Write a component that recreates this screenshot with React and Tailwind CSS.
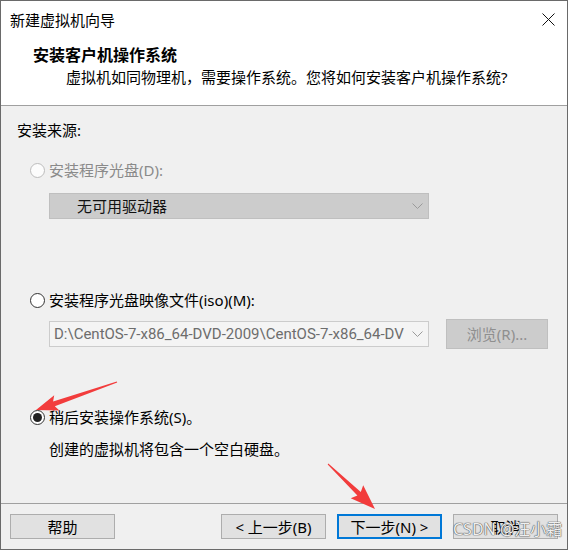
import React from "react";

function arrowPoints(tx, ty, hx, hy, headLen, headHalf, tailW, neckW) {
  const dx = hx - tx, dy = hy - ty;
  const L = Math.hypot(dx, dy);
  const ux = dx / L, uy = dy / L;
  const px = -uy, py = ux;
  const bx = hx - ux * headLen, by = hy - uy * headLen;
  const pts = [
    [tx + px * tailW / 2, ty + py * tailW / 2],
    [bx + px * neckW / 2, by + py * neckW / 2],
    [bx + px * headHalf - ux * 3, by + py * headHalf - uy * 3],
    [hx, hy],
    [bx - px * headHalf - ux * 3, by - py * headHalf - uy * 3],
    [bx - px * neckW / 2, by - py * neckW / 2],
    [tx - px * tailW / 2, ty - py * tailW / 2],
  ];
  return pts.map((p) => p.map((v) => v.toFixed(1)).join(",")).join(" ");
}

function Chevron() {
  return (
    <svg width="11" height="7" viewBox="0 0 11 7" className="shrink-0">
      <polyline points="0.5,0.5 5.5,5.5 10.5,0.5" fill="none" stroke="#9a9a9a" strokeWidth="1" />
    </svg>
  );
}

function Radio({ state }) {
  if (state === "disabled")
    return <div className="w-[15px] h-[15px] rounded-full border border-[#bcbcbc] bg-[#fcfcfc] shrink-0" />;
  if (state === "checked")
    return (
      <div className="w-[15px] h-[15px] rounded-full border border-[#333333] bg-white shrink-0 flex items-center justify-center">
        <div className="w-[9px] h-[9px] rounded-full bg-[#222222]" />
      </div>
    );
  return <div className="w-[15px] h-[15px] rounded-full border border-[#333333] bg-white shrink-0" />;
}

function Btn({ children, primary }) {
  return (
    <div
      className={
        "w-[105px] h-[25px] flex items-center justify-center bg-[#e1e1e1] leading-[20px] " +
        (primary ? "border-2 border-[#0078d7]" : "border border-[#adadad]")
      }
    >
      {children}
    </div>
  );
}

export default function App() {
  return (
    <div className="w-[570px] h-[551px] bg-white font-['Noto_Sans','Noto_Sans_CJK_SC',sans-serif] text-[15px] text-black">
      <div className="relative w-[568px] h-[550px] border border-[#6a6a6a] flex flex-col bg-[#f0f0f0]">
        {/* header */}
        <div className="bg-white h-[105px] border-b border-[#a0a0a0] flex flex-col shrink-0">
          <div className="h-[37px] flex items-center justify-between pl-[9px] pr-[12px]">
            <span className="leading-[20px]">新建虚拟机向导</span>
            <svg width="13" height="13" viewBox="0 0 13 13">
              <line x1="0.5" y1="0.5" x2="12.5" y2="12.5" stroke="#111" strokeWidth="1" />
              <line x1="12.5" y1="0.5" x2="0.5" y2="12.5" stroke="#111" strokeWidth="1" />
            </svg>
          </div>
          <div className="pl-[32px] mt-[7px] font-bold text-[16px] leading-[20px]">安装客户机操作系统</div>
          <div className="pl-[65px] mt-[2px] leading-[20px]">虚拟机如同物理机，需要操作系统。您将如何安装客户机操作系统?</div>
        </div>

        {/* body */}
        <div className="flex flex-col pt-[14px]">
          <div className="pl-[16px] leading-[20px]">安装来源:</div>

          <div className="mt-[20px] pl-[29px] h-[20px] flex items-center gap-[4px]">
            <Radio state="disabled" />
            <span className="leading-[20px] text-[#8a8a8a]">安装程序光盘(D):</span>
          </div>
          <div className="mt-[13px] ml-[48px] w-[380px] h-[26px] bg-[#cccccc] border border-[#bfbfbf] flex items-center justify-between pl-[27px] pr-[5px]">
            <span className="leading-[20px] text-[#111]">无可用驱动器</span>
            <Chevron />
          </div>

          <div className="mt-[71px] pl-[29px] h-[20px] flex items-center gap-[4px]">
            <Radio state="normal" />
            <span className="leading-[20px]">安装程序光盘映像文件(iso)(M):</span>
          </div>
          <div className="mt-[11px] ml-[48px] h-[26px] flex items-center gap-[17px]">
            <div className="w-[380px] h-[26px] bg-[#f4f4f4] border border-[#cccccc] flex items-center justify-between pl-[4px] pr-[5px]">
              <span className="leading-[20px] text-[#6d6d6d] whitespace-nowrap font-['Roboto',sans-serif]">D:\CentOS-7-x86_64-DVD-2009\CentOS-7-x86_64-DV</span>
              <Chevron />
            </div>
            <div className="w-[102px] h-[30px] shrink-0 bg-[#cccccc] border border-[#bfbfbf] flex items-center justify-center text-[#8f8f8f] leading-[20px]">
              浏览(R)...
            </div>
          </div>

          <div className="mt-[60px] pl-[29px] h-[20px] flex items-center gap-[4px]">
            <Radio state="checked" />
            <span className="leading-[20px]">稍后安装操作系统(S)。</span>
          </div>
          <div className="mt-[12px] pl-[48px] leading-[20px]">创建的虚拟机将包含一个空白硬盘。</div>
        </div>

        {/* footer */}
        <div className="mt-auto h-[46px] border-t border-[#a0a0a0] pt-[10px] px-[9px] flex items-start justify-between shrink-0">
          <Btn>帮助</Btn>
          <div className="flex gap-[11px]">
            <Btn>&lt; 上一步(B)</Btn>
            <Btn primary>下一步(N) &gt;</Btn>
            <Btn>取消</Btn>
          </div>
        </div>

        {/* watermark */}
        <div className="absolute left-[452px] top-[517px] text-[16px] leading-[22px] text-[#efefef] [text-shadow:0_0_1px_#555,0_0_1px_#555,0_0_1px_#777] whitespace-nowrap">
          CSDN @汪小霜
        </div>

        {/* annotation arrows */}
        <svg className="absolute left-[-1px] top-[-1px] pointer-events-none" width="570" height="551" viewBox="0 0 570 551">
          <polygon points={arrowPoints(117, 382, 36, 410, 19, 8, 1, 5)} fill="#f23c3c" />
          <polygon points={arrowPoints(328, 464, 375, 509, 22, 9, 1, 5)} fill="#f23c3c" />
        </svg>
      </div>
    </div>
  );
}
